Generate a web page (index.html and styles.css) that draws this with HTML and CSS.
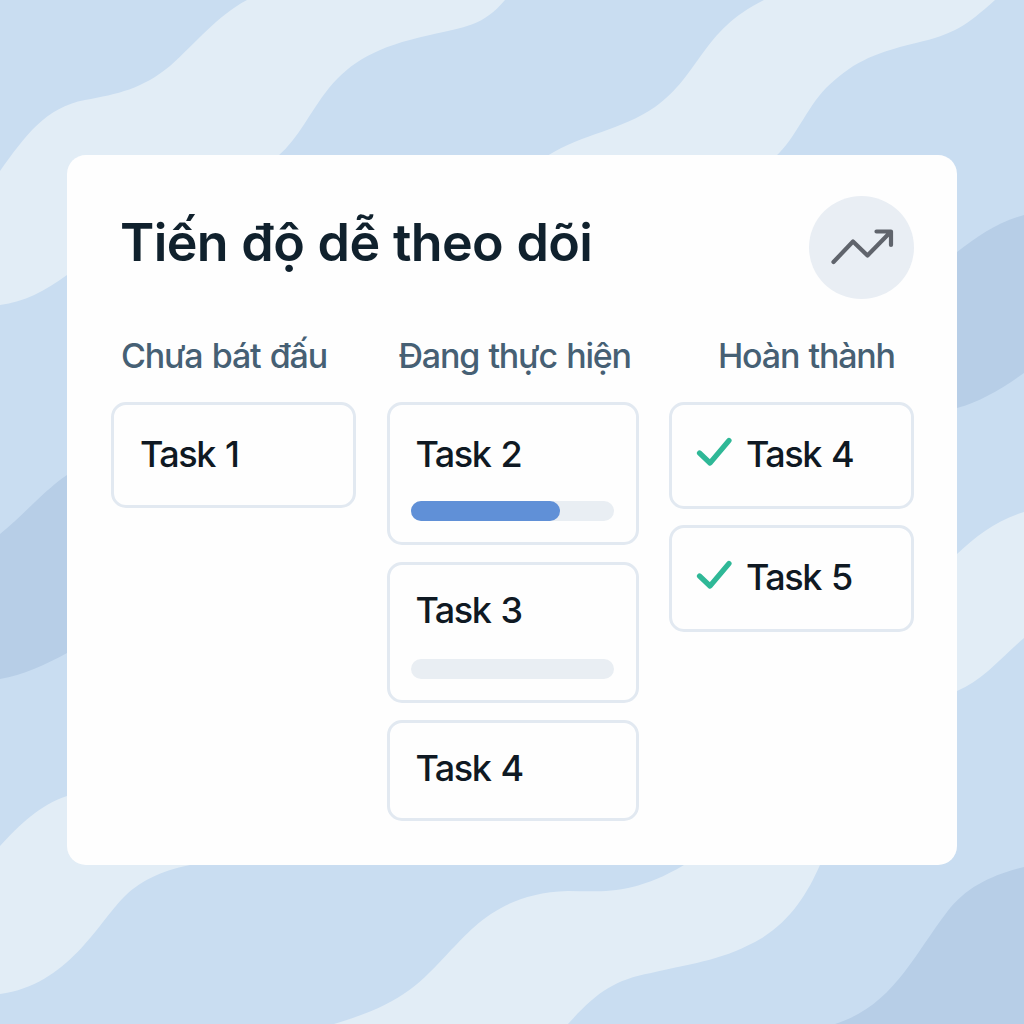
FILE: index.html
```html
<!DOCTYPE html>
<html lang="vi">
<head>
<meta charset="utf-8">
<title>Tiến độ dễ theo dõi</title>
<link rel="stylesheet" href="styles.css">
</head>
<body>
<svg class="waves" viewBox="0 0 1024 1024" aria-hidden="true">
  <g class="wave-light">
    <path d="M0 171C25 136 46 107 85 100C118 94 142 89 170 66C197 42 217 16 247 0H505C483 26 465 27 430 35C375 47 351 62 329 88C309 113 299 138 278 156L67 275C45 291 24 302 0 305Z"/>
    <path d="M547 156C584 133 620 131 655 107C701 74 701 31 764 0H995C966 26 954 34 916 43C870 54 851 64 826 88C806 109 795 139 776 156Z"/>
    <path d="M0 846C20 824 40 805 67 796L190 865C159 871 138 883 124 897C98 923 68 985 0 994Z"/>
    <path d="M684 865C632 896 600 891 568 891C500 893 472 929 451 950C416 988 400 1004 334 1024H568C595 994 613 980 651 973C698 962 724 960 762 938C792 919 808 892 820 865Z"/>
    <path d="M957 554C976 536 997 520 1024 512V638C1001 658 982 681 957 691Z"/>
  </g>
  <g class="wave-deep">
    <path d="M0 534C25 514 41 493 67 475V653C45 665 23 675 0 679Z"/>
    <path d="M957 252C978 236 998 222 1024 215V373C1003 388 980 402 957 408Z"/>
    <path d="M1024 867C992 875 966 887 947 912C912 958 892 1006 835 1024H1024Z"/>
  </g>
</svg>
<main class="board">
  <header class="board-header">
    <h1 class="board-title">Tiến độ dễ theo dõi</h1>
    <div class="trend">
      <svg class="trend-icon" viewBox="0 0 64 40"><path d="M3.500 34L23 13.500L37.500 27.500L60.500 4M46.500 3.500H61V17"/></svg>
    </div>
  </header>
  <div class="columns">
    <section class="column">
      <h2 class="column-title todo">Chưa bát đấu</h2>
      <div class="cards">
        <article class="card plain"><span class="task">Task 1</span></article>
      </div>
    </section>
    <section class="column">
      <h2 class="column-title doing">Đang thực hiện</h2>
      <div class="cards">
        <article class="card with-bar first"><span class="task">Task 2</span><div class="bar"><div class="fill" style="width:73.5%"></div></div></article>
        <article class="card with-bar"><span class="task">Task 3</span><div class="bar"></div></article>
        <article class="card short"><span class="task">Task 4</span></article>
      </div>
    </section>
    <section class="column">
      <h2 class="column-title done">Hoàn thành</h2>
      <div class="cards">
        <article class="card checked"><svg class="check" viewBox="0 0 36 30"><path d="M3.500 16L14 26L33 3.500"/></svg><span class="task">Task 4</span></article>
        <article class="card checked"><svg class="check" viewBox="0 0 36 30"><path d="M3.500 16L14 26L33 3.500"/></svg><span class="task">Task 5</span></article>
      </div>
    </section>
  </div>
</main>
</body>
</html>
```
FILE: styles.css
```css
* { box-sizing: border-box; }
body {
  margin: 0;
  width: 1024px;
  height: 1024px;
  overflow: hidden;
  padding: 155px 67px 159px;
  background: #c9ddf1;
  font-family: Inter, "Liberation Sans", sans-serif;
}
.waves { position: absolute; inset: 0; width: 1024px; height: 1024px; }
.wave-light { fill: #e2edf6; }
.wave-deep { fill: #b7cee7; }
.board {
  position: relative;
  height: 710px;
  padding: 41px 43px 0 44px;
  border-radius: 19px;
  background: #fefefe;
}
.board-header {
  display: flex;
  justify-content: space-between;
  height: 103px;
  padding-left: 9px;
}
.board-title {
  margin: 15px 0 0;
  font-size: 52px;
  line-height: 64px;
  font-weight: 600;
  letter-spacing: -0.65px;
  word-spacing: 1px;
  white-space: nowrap;
  color: #10212d;
}
.trend {
  display: grid;
  place-items: center;
  width: 105px;
  height: 103px;
  border-radius: 50%;
  background: #e9eef4;
}
.trend-icon { width: 64px; height: 40px; }
.trend-icon path, .check path { fill: none; stroke-linecap: round; stroke-linejoin: round; }
.trend-icon path { stroke: #60646c; stroke-width: 4.2; }
.columns {
  display: grid;
  grid-template-columns: 245px 252px 245px;
  justify-content: space-between;
  margin-top: 35px;
}
.column-title {
  margin: 0 0 24px;
  font-size: 34px;
  line-height: 44px;
  font-weight: 450;
  letter-spacing: -1.2px;
  word-spacing: 1.5px;
  white-space: nowrap;
  color: #466074;
}
.todo { padding-left: 10px; }
.doing { padding-left: 12px; }
.done { padding-left: 49px; }
.cards { display: flex; flex-direction: column; gap: 17px; }
.card {
  display: flex;
  border: 3px solid #e2e9f1;
  border-radius: 15px;
}
.plain { height: 106px; align-items: center; padding: 0 0 2px 26px; }
.with-bar {
  height: 141px;
  flex-direction: column;
  justify-content: space-between;
  padding: 22px 22px 21px 21px;
}
.first { height: 143px; padding-top: 26px; }
.with-bar .task { padding-left: 5px; }
.short { height: 101px; padding: 22px 26px; }
.checked { height: 107px; align-items: center; gap: 14px; padding: 0 0 3px 24px; }
.checked + .checked { margin-top: -1px; }
.task {
  font-size: 36px;
  line-height: 46px;
  font-weight: 500;
  letter-spacing: -1.5px;
  word-spacing: 2px;
  white-space: nowrap;
  color: #0f1923;
}
.bar { height: 20px; border-radius: 10px; background: #e9eef3; }
.fill { height: 100%; border-radius: 10px; background: #6090d7; }
.check { width: 36px; height: 30px; margin-bottom: 5px; }
.check path { stroke: #2fb897; stroke-width: 5.2; }
```
